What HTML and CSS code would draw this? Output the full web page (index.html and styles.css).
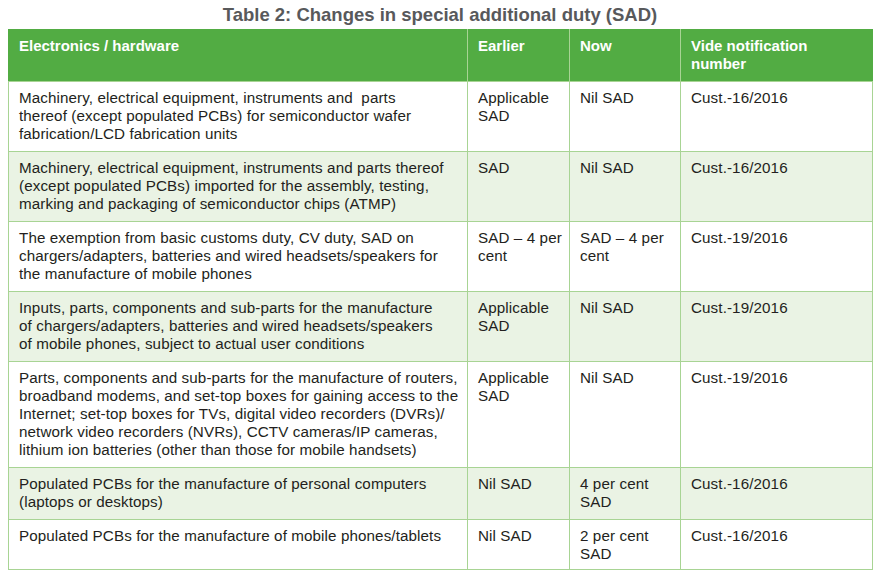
FILE: index.html
```html
<!DOCTYPE html>
<html>
<head>
<meta charset="utf-8">
<link rel="stylesheet" href="styles.css">
</head>
<body>
<div class="page">
  <h1 class="title">Table 2: Changes in special additional duty (SAD)</h1>
  <table class="duty">
    <colgroup>
      <col class="c1"><col class="c2"><col class="c3"><col class="c4">
    </colgroup>
    <thead>
      <tr>
        <th>Electronics / hardware</th>
        <th>Earlier</th>
        <th>Now</th>
        <th>Vide notification<br>number</th>
      </tr>
    </thead>
    <tbody>
      <tr>
        <td>Machinery, electrical equipment, instruments and&nbsp; parts<br>thereof (except populated PCBs) for semiconductor wafer<br>fabrication/LCD fabrication units</td>
        <td>Applicable<br>SAD</td>
        <td>Nil SAD</td>
        <td>Cust.-16/2016</td>
      </tr>
      <tr class="alt">
        <td>Machinery, electrical equipment, instruments and parts thereof<br>(except populated PCBs) imported for the assembly, testing,<br>marking and packaging of semiconductor chips (ATMP)</td>
        <td>SAD</td>
        <td>Nil SAD</td>
        <td>Cust.-16/2016</td>
      </tr>
      <tr>
        <td>The exemption from basic customs duty, CV duty, SAD on<br>chargers/adapters, batteries and wired headsets/speakers for<br>the manufacture of mobile phones</td>
        <td>SAD – 4 per<br>cent</td>
        <td>SAD – 4 per<br>cent</td>
        <td>Cust.-19/2016</td>
      </tr>
      <tr class="alt">
        <td>Inputs, parts, components and sub-parts for the manufacture<br>of chargers/adapters, batteries and wired headsets/speakers<br>of mobile phones, subject to actual user conditions</td>
        <td>Applicable<br>SAD</td>
        <td>Nil SAD</td>
        <td>Cust.-19/2016</td>
      </tr>
      <tr>
        <td>Parts, components and sub-parts for the manufacture of routers,<br>broadband modems, and set-top boxes for gaining access to the<br>Internet; set-top boxes for TVs, digital video recorders (DVRs)/<br>network video recorders (NVRs), CCTV cameras/IP cameras,<br>lithium ion batteries (other than those for mobile handsets)</td>
        <td>Applicable<br>SAD</td>
        <td>Nil SAD</td>
        <td>Cust.-19/2016</td>
      </tr>
      <tr class="alt">
        <td>Populated PCBs for the manufacture of personal computers<br>(laptops or desktops)</td>
        <td>Nil SAD</td>
        <td>4 per cent<br>SAD</td>
        <td>Cust.-16/2016</td>
      </tr>
      <tr class="last">
        <td>Populated PCBs for the manufacture of mobile phones/tablets</td>
        <td>Nil SAD</td>
        <td>2 per cent<br>SAD</td>
        <td>Cust.-16/2016</td>
      </tr>
    </tbody>
  </table>
</div>
</body>
</html>
```
FILE: styles.css
```css
html, body {
  margin: 0;
  padding: 0;
  background: #ffffff;
}
.page {
  width: 880px;
  height: 580px;
  padding: 5px 8px 0 8px;
  box-sizing: border-box;
  font-family: "Liberation Sans", Arial, sans-serif;
}
.title {
  margin: 0 0 4px 0;
  text-align: center;
  font-size: 18.5px;
  line-height: 20px;
  font-weight: bold;
  color: #58595b;
}
.duty {
  width: 864px;
  border-collapse: collapse;
  table-layout: fixed;
  font-size: 15.2px;
  letter-spacing: 0.1px;
  line-height: 18px;
  color: #231f20;
}
.c1 { width: 459px; }
.c2 { width: 102px; }
.c3 { width: 111px; }
.c4 { width: 192px; }
.duty th,
.duty td {
  border: 1px solid #a8d494;
  padding: 7px 3px 8px 10px;
  text-align: left;
  vertical-align: top;
  white-space: nowrap;
}
.duty th {
  background: #52ac43;
  color: #ffffff;
  font-weight: bold;
  letter-spacing: 0;
  font-size: 15px;
  border-color: #a8d494;
  border-top-color: #52ac43;
}
.duty thead th:first-child { border-left-color: #52ac43; }
.duty thead th:last-child { border-right-color: #52ac43; }
.duty tr.alt td {
  background: #eaf3e4;
}
.duty tr.last td {
  padding-bottom: 6px;
}
```
